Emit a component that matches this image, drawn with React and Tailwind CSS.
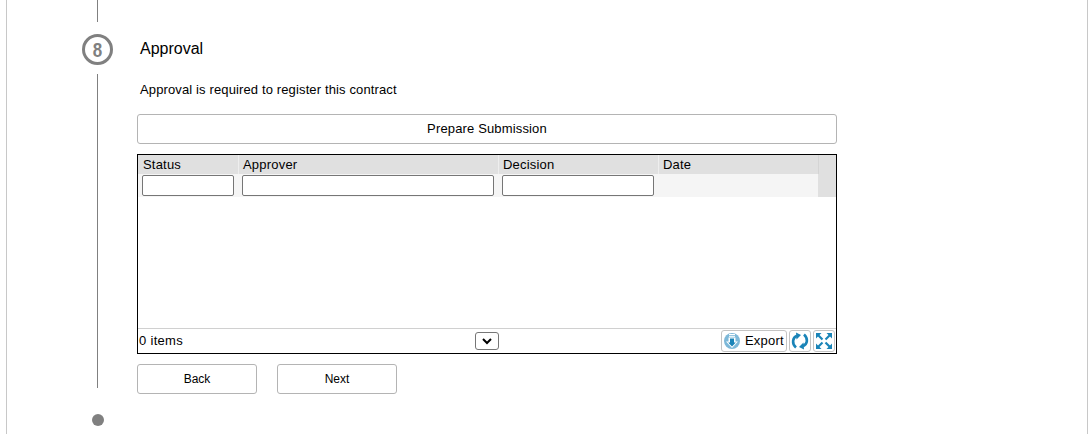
import { useState } from "react";

const columns = [
  { name: "Status", width: "w-[101px]", pad: "pl-[5px]", cell: "w-[100px]", input: "w-[92px]" },
  { name: "Approver", width: "w-[260px]", pad: "pl-[4px]", cell: "w-[260px]", input: "w-[252px]" },
  { name: "Decision", width: "w-[160px]", pad: "pl-[4px]", cell: "w-[160px]", input: "w-[152px]" },
];

function FooterButton({ children, className }) {
  return (
    <button className={"flex h-[22px] items-center rounded-[3px] border border-[#c4c4c4] bg-white " + className}>
      {children}
    </button>
  );
}

function ExportIcon() {
  return (
    <svg width="16" height="16" viewBox="0 0 16 16">
      <circle cx="8" cy="8" r="8" fill="#7db8d8" />
      <path d="M5 1.500h6M5 3.300h6" stroke="#fff" strokeWidth="1" />
      <path d="M4.500 4.500h7v4h2.500L8 15 2 8.500h2.500z" fill="#fff" />
      <path d="M6 5.500h4v4h1.800L8 13.500 4.200 9.500H6z" fill="#1a84b8" />
    </svg>
  );
}

function RefreshIcon() {
  const half = (
    <>
      <path d="M5 15.500C.5 11.500 1.500 5.500 6 3.800" fill="none" stroke="#1a84b8" strokeWidth="2.600" />
      <path d="M5 .5L10 3 5.500 7.500z" fill="#1a84b8" />
    </>
  );
  return (
    <svg width="18" height="18" viewBox="0 0 18 18">
      {half}
      <g transform="rotate(180 9 9)">{half}</g>
    </svg>
  );
}

function ExpandIcon() {
  const corner = (
    <>
      <path d="M1 1h5.500L1 6.500z" fill="#1a84b8" />
      <path d="M3 3l4.500 4.500" stroke="#1a84b8" strokeWidth="2.200" />
    </>
  );
  return (
    <svg width="18" height="18" viewBox="0 0 18 18">
      {corner}
      <g transform="rotate(90 9 9)">{corner}</g>
      <g transform="rotate(180 9 9)">{corner}</g>
      <g transform="rotate(270 9 9)">{corner}</g>
    </svg>
  );
}

function Timeline() {
  return (
    <div className="flex w-[130px] shrink-0 flex-col pl-[74px]">
      <div className="flex w-[33px] flex-col items-center">
        <div className="h-[22px] w-px bg-[#808080]" />
        <div className="mt-[12px] flex h-[31px] w-[31px] items-center justify-center rounded-full border-[3px] border-[#808080] text-[20px] font-bold leading-none text-[#808080]">
          <span className="scale-x-[0.85]">8</span>
        </div>
        <div className="mt-[9px] h-[314px] w-px bg-[#808080]" />
        <div className="mt-[26px] h-[12px] w-[12px] rounded-full bg-[#808080]" />
      </div>
    </div>
  );
}

function Grid() {
  const [filters, setFilters] = useState({});

  return (
    <div className="mt-[10px] flex h-[200px] w-[700px] flex-col border border-black">
      <div className="flex h-[19px] bg-[#e0e0e0]">
        {columns.map((col) => (
          <div key={col.name} className={col.width + " " + col.pad + " border-r border-[#eeeeee] text-[13px] tracking-[0.2px] leading-[19px]"}>
            {col.name}
          </div>
        ))}
        <div className="w-[159px] pl-[4px] text-[13px] tracking-[0.2px] leading-[19px]">Date</div>
        <div className="w-[18px] border-l border-[#d4d4d4]" />
      </div>
      <div className="flex h-[23px] bg-[#f5f5f5]">
        {columns.map((col) => (
          <div key={col.name} className={col.cell + " pl-[4px] pt-[1px]"}>
            <input
              value={filters[col.name] || ""}
              onChange={(e) => setFilters({ ...filters, [col.name]: e.target.value })}
              className={col.input + " block h-[21px] rounded-[2px] border border-[#767676] bg-white"}
            />
          </div>
        ))}
        <div className="flex-1" />
        <div className="w-[18px] bg-[#e0e0e0]" />
      </div>
      <div className="flex-1" />
      <div className="flex h-[25px] items-center border-t border-[#d0d0d0] px-px">
        <span className="w-[336px] text-[13px] tracking-[0.3px]">0 items</span>
        <div className="flex h-[18px] w-[24px] items-center justify-center rounded-[3px] border border-[#767676] bg-white">
          <svg width="10" height="7" viewBox="0 0 10 7">
            <path d="M1 1l4 4 4-4" fill="none" stroke="#000" strokeWidth="2" />
          </svg>
        </div>
        <div className="ml-auto flex items-center gap-[2px]">
          <FooterButton className="w-[66px] gap-[5px] pl-[2px] text-[13px] tracking-[0.2px]">
            <ExportIcon />
            Export
          </FooterButton>
          <FooterButton className="w-[22px] justify-center">
            <RefreshIcon />
          </FooterButton>
          <FooterButton className="w-[22px] justify-center">
            <ExpandIcon />
          </FooterButton>
        </div>
      </div>
    </div>
  );
}

export default function App() {
  return (
    <div className="h-[434px] overflow-hidden bg-white font-['Liberation_Sans',Arial,sans-serif] text-black">
      <div className="ml-[6px] flex h-[434px] w-[1082px] border-x border-[#c8c8c8]">
        <Timeline />
        <div className="flex flex-col">
          <h2 className="mt-[39px] pl-[3px] text-[16px] leading-[19px]">Approval</h2>
          <p className="mt-[24px] pl-[3px] text-[13px] leading-[16px] tracking-[0.13px]">
            Approval is required to register this contract
          </p>
          <button className="mt-[16px] h-[30px] w-[700px] rounded-[3px] border border-[#b4b4b4] bg-white text-[13px] tracking-[0.15px]">
            Prepare Submission
          </button>
          <Grid />
          <div className="mt-[10px] flex gap-[20px]">
            <button className="h-[30px] w-[120px] rounded-[3px] border border-[#b4b4b4] bg-white text-[12px]">Back</button>
            <button className="h-[30px] w-[120px] rounded-[3px] border border-[#b4b4b4] bg-white text-[12px]">Next</button>
          </div>
        </div>
      </div>
    </div>
  );
}
